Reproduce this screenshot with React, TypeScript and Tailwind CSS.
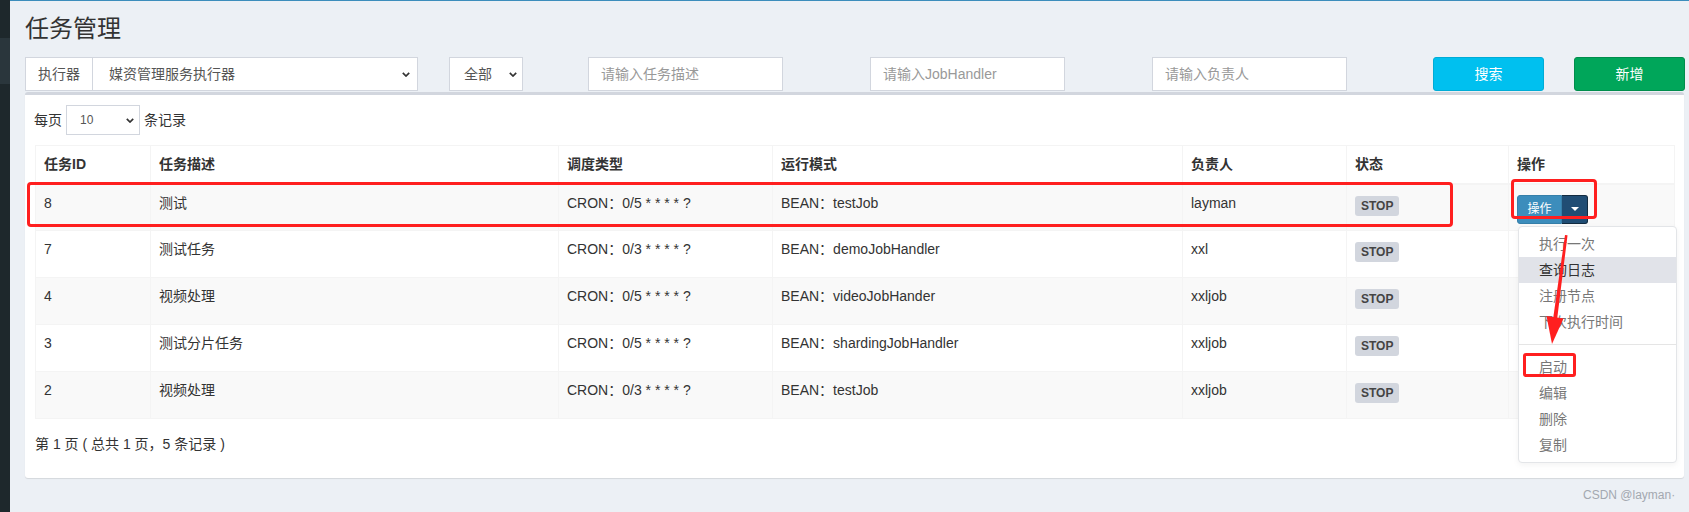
import React from "react";

const rows = [
  { id: 8, desc: "测试", cron: "CRON：0/5 * * * * ?", mode: "BEAN：testJob", owner: "layman" },
  { id: 7, desc: "测试任务", cron: "CRON：0/3 * * * * ?", mode: "BEAN：demoJobHandler", owner: "xxl" },
  { id: 4, desc: "视频处理", cron: "CRON：0/5 * * * * ?", mode: "BEAN：videoJobHander", owner: "xxljob" },
  { id: 3, desc: "测试分片任务", cron: "CRON：0/5 * * * * ?", mode: "BEAN：shardingJobHandler", owner: "xxljob" },
  { id: 2, desc: "视频处理", cron: "CRON：0/3 * * * * ?", mode: "BEAN：testJob", owner: "xxljob" },
];

const headers = ["任务ID", "任务描述", "调度类型", "运行模式", "负责人", "状态", "操作"];
const colWidths = ["w-[115px]", "w-[408px]", "w-[214px]", "w-[410px]", "w-[164px]", "w-[162px]", "w-[166px]"];

function Chevron() {
  return (
    <svg width="8" height="5" viewBox="0 0 8 5" className="shrink-0">
      <path d="M0.8 0.8L4 4L7.2 0.8" fill="none" stroke="#333" strokeWidth="1.7" />
    </svg>
  );
}

function Caret() {
  return (
    <svg width="8" height="4" viewBox="0 0 8 4">
      <path d="M0 0H8L4 4Z" fill="#fff" />
    </svg>
  );
}

function StatusLabel() {
  return (
    <span className="mt-[3px] inline-block h-5 rounded-[3px] bg-[#d2d6de] px-[6px] text-[12px] font-bold leading-5 text-[#444]">
      STOP
    </span>
  );
}

function ActionMenu() {
  const top = ["执行一次", "查询日志", "注册节点", "下次执行时间"];
  const bottom = ["启动", "编辑", "删除", "复制"];
  return (
    <div className="absolute left-[1518px] top-[226px] w-[159px] rounded-[4px] border border-[#e3e5e8] bg-white py-[4px] shadow-[0_2px_6px_rgba(0,0,0,0.05)]">
      {top.map((t) => (
        <div
          key={t}
          className={
            t === "查询日志"
              ? "bg-[#e1e3e9] px-5 py-[3px] text-[14px] leading-5 text-[#333]"
              : "px-5 py-[3px] text-[14px] leading-5 text-[#777]"
          }
        >
          {t}
        </div>
      ))}
      <div className="my-[9px] h-px bg-[#e5e5e5]" />
      {bottom.map((t) => (
        <div key={t} className="px-5 py-[3px] text-[14px] leading-5 text-[#777]">
          {t}
        </div>
      ))}
    </div>
  );
}

export default function App() {
  return (
    <div className="relative flex h-[512px] w-[1689px] overflow-hidden bg-[#ecf0f5] font-['Liberation_Sans','Noto_Sans_CJK_SC',sans-serif] text-[#333]">
      <aside className="w-[10px] shrink-0 bg-[#1e282c]">
        <div className="mt-[38px] h-[46px] bg-[#2a363c]" />
      </aside>

      <main className="flex-1 border-t border-[#3c8dbc]">
        <h1 className="ml-[15px] mt-[16px] text-[24px] leading-[24px] text-[#333]">任务管理</h1>

        {/* filters */}
        <div className="mt-[16px] flex h-[34px] pl-[15px] text-[14px] text-[#555]">
          <div className="flex w-[393px] border border-[#d2d6de] bg-white">
            <div className="flex w-[67px] items-center border-r border-[#d2d6de] pl-3">执行器</div>
            <div className="flex flex-1 items-center justify-between pl-4 pr-[7px]">
              <span>媒资管理服务执行器</span>
              <Chevron />
            </div>
          </div>
          <div className="ml-[31px] flex w-[74px] items-center justify-between border border-[#d2d6de] bg-white pl-[14px] pr-[5px]">
            <span>全部</span>
            <Chevron />
          </div>
          <input
            placeholder="请输入任务描述"
            className="ml-[65px] h-[34px] w-[195px] border border-[#d2d6de] bg-white px-3 text-[14px] outline-none placeholder:text-[#999]"
          />
          <input
            placeholder="请输入JobHandler"
            className="ml-[87px] h-[34px] w-[195px] border border-[#d2d6de] bg-white px-3 text-[14px] outline-none placeholder:text-[#999]"
          />
          <input
            placeholder="请输入负责人"
            className="ml-[87px] h-[34px] w-[195px] border border-[#d2d6de] bg-white px-3 text-[14px] outline-none placeholder:text-[#999]"
          />
          <button className="ml-[86px] h-[34px] w-[111px] rounded-[3px] border border-[#00acd6] bg-[#00c0ef] text-[14px] text-white">
            搜索
          </button>
          <button className="ml-[30px] h-[34px] w-[111px] rounded-[3px] border border-[#008d4c] bg-[#00a65a] text-[14px] text-white">
            新增
          </button>
        </div>

        {/* box */}
        <section className="ml-[15px] mt-px w-[1659px] rounded-[3px] border-t-[3px] border-[#d2d6de] bg-white p-[10px] shadow-[0_1px_1px_rgba(0,0,0,0.1)]">
          <div className="mb-[10px] flex h-[30px] items-center text-[14px]">
            <span className="-ml-px">每页</span>
            <div className="ml-[4px] flex h-[30px] w-[74px] items-center justify-between border border-[#d2d6de] pl-[13px] pr-[5px] text-[12px] text-[#555]">
              <span>10</span>
              <Chevron />
            </div>
            <span className="ml-[4px]">条记录</span>
          </div>

          <table className="w-[1639px] table-fixed border-collapse text-[14px] text-[#333]">
            <colgroup>
              {colWidths.map((w) => (
                <col key={w} className={w} />
              ))}
            </colgroup>
            <thead>
              <tr className="h-[38px]">
                {headers.map((h) => (
                  <th key={h} className="border border-b-2 border-[#f4f4f4] px-2 text-left align-middle font-bold leading-5">
                    {h}
                  </th>
                ))}
              </tr>
            </thead>
            <tbody>
              {rows.map((r, i) => (
                <tr key={r.id} className={i % 2 === 0 ? "h-[47px] bg-[#f9f9f9]" : "h-[47px] bg-white"}>
                  <td className="border border-[#f4f4f4] px-2 pt-2 align-top leading-5">{r.id}</td>
                  <td className="border border-[#f4f4f4] px-2 pt-2 align-top leading-5">{r.desc}</td>
                  <td className="border border-[#f4f4f4] px-2 pt-2 align-top leading-5">{r.cron}</td>
                  <td className="border border-[#f4f4f4] px-2 pt-2 align-top leading-5">{r.mode}</td>
                  <td className="border border-[#f4f4f4] px-2 pt-2 align-top leading-5">{r.owner}</td>
                  <td className="border border-[#f4f4f4] px-2 pt-2 align-top leading-5">
                    <StatusLabel />
                  </td>
                  <td className="border border-[#f4f4f4] px-2 pt-2 align-top leading-5">
                    {i === 0 && (
                      <div className="mt-[2px] flex h-[29px] w-[71px]">
                        <span className="flex w-[45px] items-center justify-center rounded-l-[3px] border border-[#367fa9] bg-[#3c8dbc] text-[12px] text-white">
                          操作
                        </span>
                        <span className="flex w-[26px] items-center justify-center rounded-r-[3px] border border-l-0 border-[#122b40] bg-[#204d74]">
                          <Caret />
                        </span>
                      </div>
                    )}
                  </td>
                </tr>
              ))}
            </tbody>
          </table>

          <div className="pb-[14px] pt-[15px] text-[14px] leading-5 text-[#333]">第 1 页 ( 总共 1 页，5 条记录 )</div>
        </section>
      </main>

      <ActionMenu />

      {/* red annotations */}
      <div className="absolute left-[27px] top-[182px] h-[45px] w-[1426px] rounded-[4px] border-[3px] border-[#ff1f1f]" />
      <div className="absolute left-[1511px] top-[179px] h-[40px] w-[86px] rounded-[4px] border-[3px] border-[#ff1f1f]" />
      <div className="absolute left-[1523px] top-[353px] h-[24px] w-[53px] rounded-[3px] border-[3px] border-[#ff1f1f]" />
      <svg className="absolute left-[1540px] top-[230px]" width="30" height="120" viewBox="0 0 30 120">
        <path d="M25 5L27.5 5.3L17 90L13 89.5Z" fill="#ff1f1f" />
        <path d="M6.5 86L23.5 88.5L12 114Z" fill="#ff1f1f" />
      </svg>

      <div className="absolute left-[1583px] top-[487px] text-[12px] leading-4 text-[#a3a8b0]">CSDN @layman·</div>
    </div>
  );
}
